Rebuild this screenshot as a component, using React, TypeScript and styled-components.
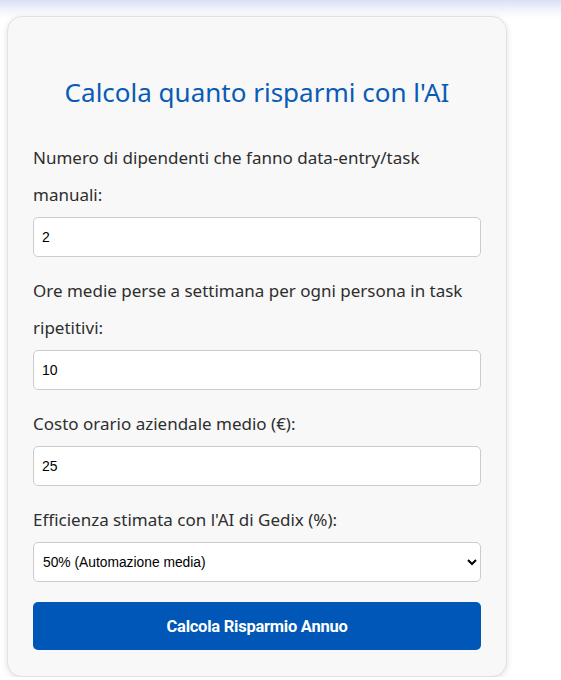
import React from "react";
import styled, { createGlobalStyle } from "styled-components";

const Global = createGlobalStyle`
  html, body { margin: 0; padding: 0; }
  body {
    background: linear-gradient(to bottom, #d9dff6 0px, #eef1fb 8px, #ffffff 18px) no-repeat;
    background-color: #ffffff;
    font-family: "Noto Sans", "Open Sans", sans-serif;
  }
`;

const Page = styled.div`
  padding: 16px 0 0 7px;
`;

const Card = styled.div`
  box-sizing: border-box;
  width: 500px;
  background: #f8f8f8;
  border: 1px solid #e1e1e1;
  border-radius: 15px;
  box-shadow: 0 2px 6px rgba(0, 0, 0, 0.12);
  padding: 58px 25px 26px;
`;

const Title = styled.h2`
  margin: 0 0 30px;
  text-align: center;
  color: #0a5bb5;
  font-weight: 400;
  font-size: 26px;
  line-height: 34px;
`;

const Field = styled.div`
  display: flex;
  flex-direction: column;
  margin-bottom: 15px;
`;

const Label = styled.label`
  font-size: 17px;
  line-height: 37px;
  color: #2e2e2e;
  margin-bottom: 4px;
`;

const Input = styled.input`
  box-sizing: border-box;
  width: 100%;
  height: 40px;
  padding: 0 8px;
  border: 1px solid #cccccc;
  border-radius: 5px;
  background: #ffffff;
  font-family: "Liberation Sans", Arial, sans-serif;
  font-size: 14px;
  color: #000000;
`;

const Select = styled.select`
  box-sizing: border-box;
  width: 100%;
  height: 40px;
  padding: 0 5px;
  border: 1px solid #cccccc;
  border-radius: 5px;
  background: #ffffff;
  font-family: "Liberation Sans", Arial, sans-serif;
  font-size: 13.8px;
  color: #000000;
`;

const Button = styled.button`
  width: 100%;
  height: 48px;
  margin-top: 5px;
  border: none;
  border-radius: 5px;
  background: #0057b7;
  color: #ffffff;
  font-family: Roboto, "Liberation Sans", sans-serif;
  font-weight: 700;
  font-size: 16.5px;
  letter-spacing: -0.25px;
  cursor: pointer;
`;

export default function App() {
  return (
    <>
      <Global />
      <Page>
        <Card>
          <Title>Calcola quanto risparmi con l'AI</Title>
          <Field>
            <Label htmlFor="dip">Numero di dipendenti che fanno data-entry/task manuali:</Label>
            <Input id="dip" type="number" defaultValue={2} />
          </Field>
          <Field>
            <Label htmlFor="ore">Ore medie perse a settimana per ogni persona in task ripetitivi:</Label>
            <Input id="ore" type="number" defaultValue={10} />
          </Field>
          <Field>
            <Label htmlFor="costo">Costo orario aziendale medio (€):</Label>
            <Input id="costo" type="number" defaultValue={25} />
          </Field>
          <Field>
            <Label htmlFor="eff">Efficienza stimata con l'AI di Gedix (%):</Label>
            <Select id="eff" defaultValue="50">
              <option value="30">30% (Automazione leggera)</option>
              <option value="50">50% (Automazione media)</option>
              <option value="70">70% (Automazione avanzata)</option>
            </Select>
          </Field>
          <Button type="button">Calcola Risparmio Annuo</Button>
        </Card>
      </Page>
    </>
  );
}
